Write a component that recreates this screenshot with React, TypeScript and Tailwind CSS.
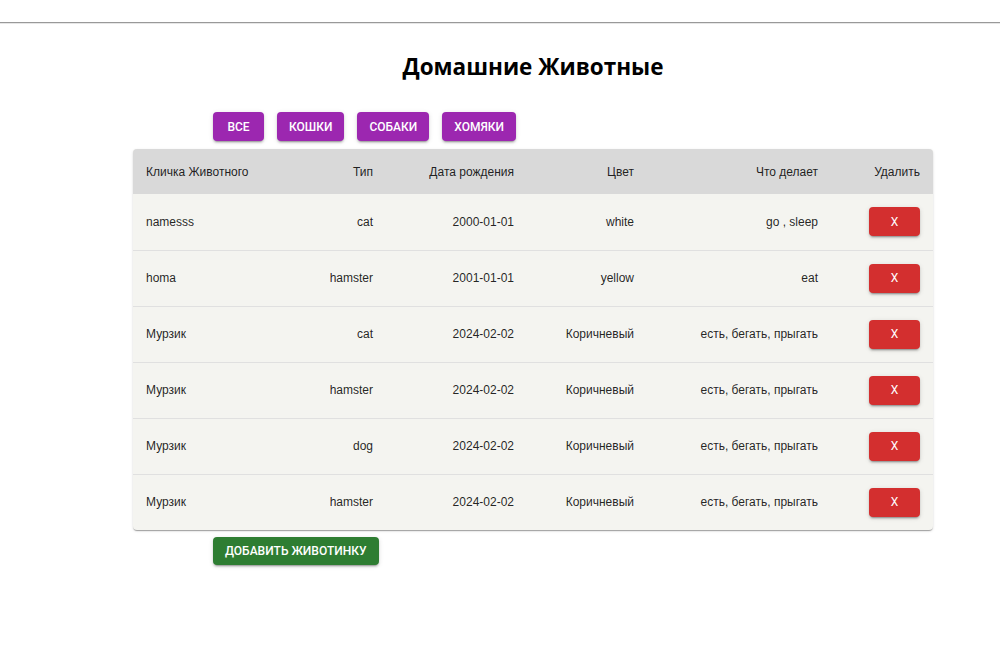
import React from "react";

type Pet = {
    name: string;
    type: string;
    birth: string;
    color: string;
    does: string;
};

const pets: Pet[] = [
    { name: "namesss", type: "cat", birth: "2000-01-01", color: "white", does: "go , sleep" },
    { name: "homa", type: "hamster", birth: "2001-01-01", color: "yellow", does: "eat" },
    { name: "Мурзик", type: "cat", birth: "2024-02-02", color: "Коричневый", does: "есть, бегать, прыгать" },
    { name: "Мурзик", type: "hamster", birth: "2024-02-02", color: "Коричневый", does: "есть, бегать, прыгать" },
    { name: "Мурзик", type: "dog", birth: "2024-02-02", color: "Коричневый", does: "есть, бегать, прыгать" },
    { name: "Мурзик", type: "hamster", birth: "2024-02-02", color: "Коричневый", does: "есть, бегать, прыгать" },
];

const filters = ["Все", "Кошки", "Собаки", "Хомяки"];

const btnShadow =
    "shadow-[0px_3px_1px_-2px_rgba(0,0,0,0.2),0px_2px_2px_0px_rgba(0,0,0,0.14),0px_1px_5px_0px_rgba(0,0,0,0.12)]";

export default function App() {
    return (
        <div className="min-h-[652px] bg-white font-['Liberation_Sans',Arial,sans-serif] text-[12px] text-[rgba(0,0,0,0.87)]">
            <div className="pt-[22px]">
                <div className="h-[2px] border-t border-[#999] border-b border-b-[#e6e6e6]" />
            </div>
            <div className="ml-[133px] w-[800px]">
                <h1 className="mt-[27px] text-center font-['Open_Sans',sans-serif] text-[22.5px] font-bold leading-[32px] text-black">
                    Домашние Животные
                </h1>
                <div className="mt-[29px] flex gap-[13px] pl-[80px]">
                    {filters.map((f) => (
                        <button
                            key={f}
                            className={`h-[29px] min-w-[51px] rounded-[4px] bg-[#9c27b0] px-[12px] font-['Roboto',sans-serif] text-[12px] font-medium uppercase text-white ${btnShadow}`}
                        >
                            {f}
                        </button>
                    ))}
                </div>
                <div className="mt-[8px] overflow-hidden rounded-[4px] bg-[#f4f4f0] shadow-[0px_2px_1px_-1px_rgba(0,0,0,0.2),0px_1px_1px_0px_rgba(0,0,0,0.14),0px_1px_3px_0px_rgba(0,0,0,0.12)]">
                    <table className="w-full table-fixed border-collapse">
                        <colgroup>
                            <col className="w-[157px]" />
                            <col className="w-[96px]" />
                            <col className="w-[141px]" />
                            <col className="w-[120px]" />
                            <col className="w-[184px]" />
                            <col className="w-[102px]" />
                        </colgroup>
                        <thead>
                            <tr className="h-[45px] bg-[#d9d9d9]">
                                <th className="px-[13px] text-left font-normal">Кличка Животного</th>
                                <th className="px-[13px] text-right font-normal">Тип</th>
                                <th className="px-[13px] text-right font-normal">Дата рождения</th>
                                <th className="px-[13px] text-right font-normal">Цвет</th>
                                <th className="px-[13px] text-right font-normal">Что делает</th>
                                <th className="px-[13px] text-right font-normal">Удалить</th>
                            </tr>
                        </thead>
                        <tbody>
                            {pets.map((p, i) => (
                                <tr key={i} className={`h-[56px] ${i < pets.length - 1 ? "border-b border-[#e0e0e0]" : ""}`}>
                                    <td className="px-[13px] text-left">{p.name}</td>
                                    <td className="px-[13px] text-right">{p.type}</td>
                                    <td className="px-[13px] text-right">{p.birth}</td>
                                    <td className="px-[13px] text-right">{p.color}</td>
                                    <td className="px-[13px] text-right">{p.does}</td>
                                    <td className="px-[13px] text-right">
                                        <button
                                            className={`h-[29px] w-[51px] rounded-[4px] bg-[#d32f2f] font-['Roboto',sans-serif] text-[12px] text-white ${btnShadow}`}
                                        >
                                            X
                                        </button>
                                    </td>
                                </tr>
                            ))}
                        </tbody>
                    </table>
                </div>
                <div className="mt-[7px] pl-[80px]">
                    <button
                        className={`h-[28px] rounded-[4px] bg-[#2e7d32] px-[12px] font-['Roboto',sans-serif] text-[12px] font-medium uppercase text-white ${btnShadow}`}
                    >
                        Добавить животинку
                    </button>
                </div>
            </div>
        </div>
    );
}
